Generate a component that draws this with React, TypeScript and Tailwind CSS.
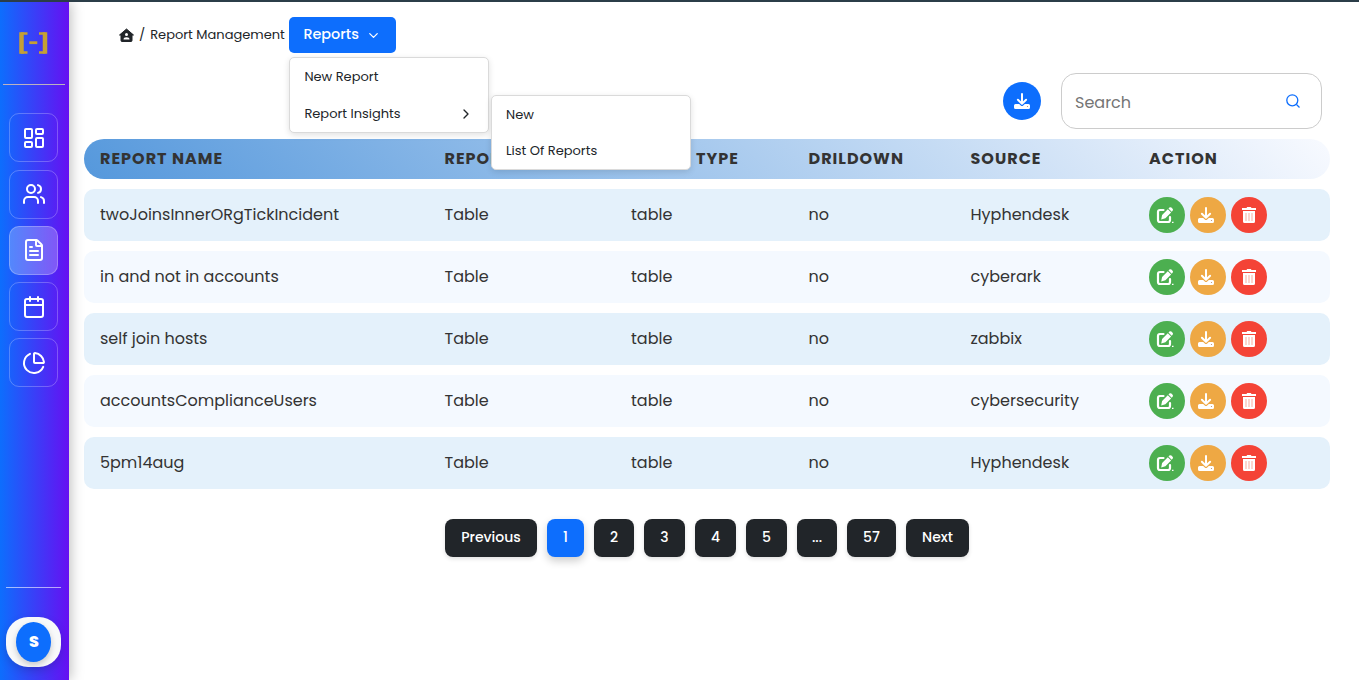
import React from "react";
import { LayoutDashboard, Users, FileText, Calendar, ChartPie, ChevronDown, ChevronRight } from "lucide-react";

const nav = [LayoutDashboard, Users, FileText, Calendar, ChartPie];

const rows = [
  { name: "twoJoinsInnerORgTickIncident", source: "Hyphendesk" },
  { name: "in and not in accounts", source: "cyberark" },
  { name: "self join hosts", source: "zabbix" },
  { name: "accountsComplianceUsers", source: "cybersecurity" },
  { name: "5pm14aug", source: "Hyphendesk" },
];

const pages = [
  { label: "Previous", cls: "w-[92px]" },
  { label: "1", cls: "w-[37px]" },
  { label: "2", cls: "w-[40px]" },
  { label: "3", cls: "w-[41px]" },
  { label: "4", cls: "w-[41px]" },
  { label: "5", cls: "w-[41px]" },
  { label: "...", cls: "w-[40px]" },
  { label: "57", cls: "w-[49px]" },
  { label: "Next", cls: "w-[63px]" },
];

const columns = "grid grid-cols-[344.5px_186.500px_177.500px_162px_178.500px_1fr] items-center pl-4";

function DownloadIcon() {
  return (
    <svg width="18" height="18" viewBox="0 0 18 18" fill="none">
      <path fill="#fff" d="M2.500 12h3.700l1.600 1.500q1.200 1 2.400 0l1.600-1.500h3.700q1.500 0 1.500 1.500v2q0 1.500-1.500 1.500h-13Q1 17 1 15.500v-2Q1 12 2.500 12z" />
      <path d="M9 2v9.500M4.900 7.700 9 11.700l4.100-4" stroke="#fff" strokeWidth="2" strokeLinecap="round" strokeLinejoin="round" />
      <circle cx="14.500" cy="14.500" r=".6" fill="#b98a6a" />
    </svg>
  );
}

function EditIcon() {
  return (
    <svg width="18" height="18" viewBox="0 0 18 18" fill="none">
      <path d="M7.500 4H4Q2 4 2 6v8q0 2 2 2h8q2 0 2-2v-3" stroke="#fff" strokeWidth="2.200" strokeLinecap="round" />
      <path fill="#fff" d="m6.100 8.900 5.700-5.700 3.300 3.300-5.700 5.700-4.200 1.200zM12.500 2.500l.9-.9q1-.9 2 0l1.200 1.200q.9 1 0 2l-.9.900z" />
      <path fill="#fff" d="M16 15.700h1.500v1.300H16z" />
    </svg>
  );
}

function TrashIcon() {
  return (
    <svg width="16" height="18" viewBox="0 0 16 18">
      <path fill="#fff" d="M1 2h4.500l.7-1h3.600l.7 1H15v2H1zM2 5h12v10.500q0 1.500-1.500 1.500h-9Q2 17 2 15.500z" />
      <path d="M5 7v8M8 7v8M11 7v8" stroke="#f9b5a8" strokeWidth="1.100" />
    </svg>
  );
}

export default function App() {
  return (
    <div className="flex h-[680px] w-full overflow-hidden border-t-2 border-[#2b3d48] bg-white font-[Poppins,Inter,sans-serif] text-[#212529]">
      <aside className="z-10 flex w-[69px] shrink-0 flex-col items-center bg-[linear-gradient(90deg,#0d6efd,#6610f2)] shadow-[2px_0_12px_rgba(0,0,0,0.25)]">
        <svg className="mt-[29px] mr-[3px]" width="32" height="24" viewBox="0 0 32 24" fill="none" stroke="#c4a035">
          <path d="M10.500 2.500H4M10.500 21.500H4M22 2.500H28.500M22 21.500H28.500" strokeWidth="2.400" />
          <path d="M4.500 1.300v21.400M28 1.300v21.400" strokeWidth="4.500" />
          <path d="M12.300 11.700h8" strokeWidth="2.800" />
        </svg>
        <div className="mt-[29px] mr-[1px] h-px w-[62px] bg-[#bcb2bf]" />
        <nav className="mt-[28.300px] flex flex-col gap-[7.250px] pr-[2px]">
          {nav.map((Icon, i) => (
            <a key={i} className={"flex h-[49px] w-[49px] items-center justify-center rounded-[10px] border border-white/25 text-white " + (i === 2 ? "bg-white/25" : "")}>
              <Icon size={24} strokeWidth={2} />
            </a>
          ))}
        </nav>
        <div className="mt-auto mr-[2px] h-px w-[55px] bg-white/60" />
        <div className="mt-[29px] mr-[2px] mb-[13px] flex h-[50px] w-[55px] items-center justify-center rounded-[22px] bg-[#f8f9fa] shadow-[0_4px_10px_rgba(0,0,0,0.15)]">
          <div className="flex h-10 w-[35px] items-center justify-center rounded-[50%] bg-[#0d6efd] pl-px text-base font-extrabold text-white shadow-[0_3px_6px_rgba(0,0,0,0.2)]">S</div>
        </div>
      </aside>

      <main className="min-w-0 flex-1 pr-[29px] pl-[15px]">
        <header className="relative flex h-[71px] items-start pt-[15px] pl-[35px]">
          <div className="flex h-9 w-[170px] items-center">
            <svg className="shrink-0" width="15" height="14" viewBox="0 0 15 14">
              <path fill="#212529" stroke="#212529" strokeLinejoin="round" d="M7.500 1 14.500 7H13v5.500q0 1-1 1H3q-1 0-1-1V7H.5z" />
              <circle cx="7.500" cy="6.500" r="1.500" fill="#fff" />
              <path fill="#fff" d="M4.500 11.500q0-2.200 3-2.200t3 2.200z" />
            </svg>
            <span className="ml-[5px] text-[13px]">/</span>
            <span className="ml-[5px] text-[13px] whitespace-nowrap">Report Management</span>
          </div>
          <button className="flex h-9 w-[107px] items-center rounded-[5px] bg-[#0d6efd] pb-px pl-[14.400px] text-[14.400px] font-medium text-white">
            Reports
            <ChevronDown className="mt-[2px] ml-[7px]" size={15} strokeWidth={2} />
          </button>

          <div className="absolute top-[55px] left-[205px] z-20 flex h-[76px] w-[200px] flex-col rounded-[5px] border border-[#dadada] bg-white pl-[14.400px] text-[13px] shadow-[0_2px_6px_rgba(0,0,0,0.12)]">
            <div className="flex h-[38px] items-center">New Report</div>
            <div className="flex h-[36px] items-center justify-between pr-[14px]">
              Report Insights
              <ChevronRight size={16} strokeWidth={2} />
            </div>
          </div>
          <div className="absolute top-[93px] left-[407px] z-20 flex h-[75px] w-[200px] flex-col rounded-[5px] border border-[#dadada] bg-white pl-[14px] text-[13px] shadow-[0_2px_6px_rgba(0,0,0,0.12)]">
            <div className="flex h-[37px] items-center">New</div>
            <div className="flex h-[36px] items-center">List Of Reports</div>
          </div>
        </header>

        <div className="flex h-14 items-center justify-end pr-[8px]">
          <button className="mr-5 flex h-[38px] w-[38px] items-center justify-center rounded-full bg-[#0d6efd]">
            <DownloadIcon />
          </button>
          <div className="flex h-14 w-[261px] items-center justify-between rounded-[15px] border border-[#ccc] pr-[21px] pl-[13px]">
            <span className="pt-[3px] text-base text-[#757575]">Search</span>
            <svg width="14" height="14" viewBox="0 0 14 14" fill="none" stroke="#0d6efd" strokeWidth="1.300">
              <circle cx="6.300" cy="6.300" r="5.500" />
              <path d="m10.500 10.500 3 3" />
            </svg>
          </div>
        </div>

        <section className="mt-[10px] flex flex-col gap-[10px]">
          <div className={columns + " h-10 rounded-[20px] bg-[linear-gradient(45deg,#5598dc,#f8faff)] text-base font-bold whitespace-nowrap text-[#333]"}>
            <span className="tracking-[1px]">REPORT NAME</span>
            <span className="tracking-[1px]">REPORT</span>
            <span className="pl-[65px] tracking-[1px]">TYPE</span>
            <span className="tracking-[1px]">DRILDOWN</span>
            <span className="tracking-[1px]">SOURCE</span>
            <span className="tracking-[1px]">ACTION</span>
          </div>
          {rows.map((r, i) => (
            <div key={i} className={columns + " h-[52px] rounded-[10px] text-base text-[#333] " + (i % 2 ? "bg-[#f4f9ff]" : "bg-[#e4f1fb]")}>
              <span>{r.name}</span>
              <span>Table</span>
              <span>table</span>
              <span>no</span>
              <span>{r.source}</span>
              <div className="flex gap-[5px]">
                <button className="flex h-9 w-9 items-center justify-center rounded-full bg-[#4caf50] pr-[4px]"><EditIcon /></button>
                <button className="flex h-9 w-9 items-center justify-center rounded-full bg-[#eea844] pr-[4px]"><DownloadIcon /></button>
                <button className="flex h-9 w-9 items-center justify-center rounded-full bg-[#f44336]"><TrashIcon /></button>
              </div>
            </div>
          ))}
        </section>

        <div className="mt-[30px] flex justify-center gap-[10px]">
          {pages.map((p, i) => (
            <button key={i} className={p.cls + " flex h-[38px] items-center justify-center rounded-[8px] pb-[2px] text-sm font-medium text-white " + (i === 1 ? "bg-[#0d6efd] shadow-[0_4px_8px_rgba(0,0,0,0.2)]" : "bg-[#212529] shadow-[0_2px_4px_rgba(0,0,0,0.12)]")}>
              {p.label}
            </button>
          ))}
        </div>
      </main>
    </div>
  );
}
